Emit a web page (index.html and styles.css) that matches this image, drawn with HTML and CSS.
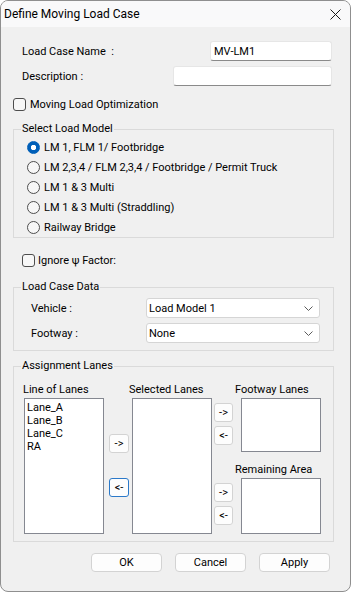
FILE: index.html
```html
<!DOCTYPE html>
<html lang="en">

<head>
    <meta charset="UTF-8">
    <meta name="viewport" content="width=device-width, initial-scale=1.0">
    <title>Define Moving Load Case</title>
    <link rel="stylesheet" href="styles.css">
</head>

<body>
    <div class="window">
        <div class="titlebar">
            <span class="title">Define Moving Load Case</span>
            <svg class="close" width="11" height="11" viewBox="0 0 11 11">
                <path d="M0.5 0.5 L10.5 10.5 M10.5 0.5 L0.5 10.5" stroke="#1a1a1a" stroke-width="1" fill="none" />
            </svg>
        </div>

        <div class="content">
            <div class="field-row first">
                <span class="label">Load Case Name &nbsp;:</span>
                <div class="text-input name-input">MV-LM1</div>
            </div>
            <div class="field-row">
                <span class="label">Description :</span>
                <div class="text-input desc-input"></div>
            </div>

            <div class="check-row optimization">
                <span class="checkbox"></span>
                <span>Moving Load Optimization</span>
            </div>

            <fieldset class="group model-group">
                <legend>Select Load Model</legend>
                <div class="radio-list">
                    <div class="radio-row"><span class="radio checked"></span>LM 1, FLM 1/ Footbridge</div>
                    <div class="radio-row"><span class="radio"></span>LM 2,3,4 / FLM 2,3,4 / Footbridge / Permit Truck</div>
                    <div class="radio-row"><span class="radio"></span>LM 1 &amp; 3 Multi</div>
                    <div class="radio-row"><span class="radio"></span>LM 1 &amp; 3 Multi (Straddling)</div>
                    <div class="radio-row"><span class="radio"></span>Railway Bridge</div>
                </div>
            </fieldset>

            <div class="check-row ignore">
                <span class="checkbox"></span>
                <span>Ignore ψ Factor:</span>
            </div>

            <fieldset class="group data-group">
                <legend>Load Case Data</legend>
                <div class="data-list">
                    <div class="data-row">
                        <span class="data-label">Vehicle :</span>
                        <div class="combo">
                            <span>Load Model 1</span>
                            <svg width="9" height="5" viewBox="0 0 9 5">
                                <path d="M0.5 0.5 L4.5 4.5 L8.5 0.5" stroke="#5c5c5c" stroke-width="1" fill="none" />
                            </svg>
                        </div>
                    </div>
                    <div class="data-row">
                        <span class="data-label">Footway :</span>
                        <div class="combo">
                            <span>None</span>
                            <svg width="9" height="5" viewBox="0 0 9 5">
                                <path d="M0.5 0.5 L4.5 4.5 L8.5 0.5" stroke="#5c5c5c" stroke-width="1" fill="none" />
                            </svg>
                        </div>
                    </div>
                </div>
            </fieldset>

            <fieldset class="group lanes-group">
                <legend>Assignment Lanes</legend>
                <div class="lanes">
                    <div class="lane-col">
                        <span class="col-label lines-label">Line of Lanes</span>
                        <div class="listbox tall">
                            <div>Lane_A</div>
                            <div>Lane_B</div>
                            <div>Lane_C</div>
                            <div>RA</div>
                        </div>
                    </div>
                    <div class="btn-col left-btns">
                        <button class="small-btn">-&gt;</button>
                        <button class="small-btn focused second">&lt;-</button>
                    </div>
                    <div class="lane-col selected-col">
                        <span class="col-label selected-label">Selected Lanes</span>
                        <div class="listbox tall"></div>
                    </div>
                    <div class="btn-col right-btns">
                        <button class="small-btn">-&gt;</button>
                        <button class="small-btn near">&lt;-</button>
                        <button class="small-btn far">-&gt;</button>
                        <button class="small-btn near">&lt;-</button>
                    </div>
                    <div class="lane-col footway-col">
                        <span class="col-label side-label">Footway Lanes</span>
                        <div class="listbox footway-box"></div>
                        <span class="col-label side-label remaining-label">Remaining Area</span>
                        <div class="listbox remaining-box"></div>
                    </div>
                </div>
            </fieldset>

            <div class="actions">
                <button class="btn">OK</button>
                <button class="btn">Cancel</button>
                <button class="btn">Apply</button>
            </div>
        </div>
    </div>
</body>

</html>
```

FILE: styles.css
```css
* {
    box-sizing: border-box;
}

body {
    margin: 0;
    font-family: "Segoe UI", Roboto, "Liberation Sans", sans-serif;
    font-size: 11px;
    color: #000;
}

.window {
    width: 351px;
    height: 592px;
    border: 1px solid #8f8f8f;
    border-radius: 8px;
    background-color: #f0f0f0;
    overflow: hidden;
}

.titlebar {
    height: 26px;
    display: flex;
    align-items: center;
    justify-content: space-between;
    padding: 0 9px 0 3px;
    background-color: #f9f9fa;
    font-size: 12px;
}

.content {
    padding: 0 16px 0 12px;
}

.field-row {
    display: flex;
    align-items: center;
    justify-content: space-between;
    height: 20px;
    margin: 5px 2px 0 9px;
}

.field-row.first {
    margin-top: 14px;
}

.text-input {
    height: 20px;
    background-color: #fff;
    border: 1px solid #e6e6e6;
    border-bottom: 1px solid #8a8a8a;
    border-radius: 3px;
    padding: 2px 3px;
    line-height: 15px;
}

.name-input {
    width: 122px;
}

.desc-input {
    width: 159px;
}

.check-row {
    display: flex;
    align-items: center;
    height: 13px;
}

.optimization {
    margin-top: 12px;
    gap: 4px;
}

.ignore {
    margin: 16px 0 0 9px;
    gap: 3px;
}

.checkbox {
    width: 13px;
    height: 13px;
    border: 1px solid #4d4d4d;
    border-radius: 3px;
    background-color: #f7f7f7;
}

.group {
    margin: 0;
    padding: 0;
    width: 321px;
    border: 1px solid #dadada;
    min-inline-size: 0;
}

.group legend {
    margin-left: 7px;
    padding: 0 1px;
    line-height: 16px;
}

.model-group {
    margin-top: 10px;
}

.radio-list {
    padding-left: 13px;
}

.radio-row {
    display: flex;
    align-items: center;
    gap: 4px;
    height: 20px;
}

.radio {
    width: 13px;
    height: 13px;
    border: 1px solid #4d4d4d;
    border-radius: 50%;
    background-color: #f7f7f7;
}

.radio.checked {
    border-color: #005fb8;
    background: radial-gradient(circle, #fff 0 2.4px, #005fb8 3px);
}

.data-group {
    margin-top: 12px;
}

.data-list {
    display: flex;
    flex-direction: column;
    gap: 5px;
    padding: 3px 13px 7px 17px;
}

.data-row {
    display: flex;
    align-items: center;
    height: 20px;
}

.data-label {
    width: 115px;
}

.combo {
    width: 174px;
    height: 20px;
    display: flex;
    align-items: center;
    justify-content: space-between;
    padding: 0 6px 0 2px;
    background-color: #fff;
    border: 1px solid #d5d5d5;
    border-radius: 3px;
}

.lanes-group {
    margin-top: 7px;
}

.lanes {
    display: flex;
    padding: 7px 0 7px 10px;
}

.lane-col {
    display: flex;
    flex-direction: column;
    width: 80px;
}

.col-label {
    height: 17px;
    line-height: 17px;
    white-space: nowrap;
}

.lines-label {
    margin-left: -1px;
}

.selected-col {
    margin-left: 3px;
}

.selected-label {
    margin-left: -3px;
}

.footway-col {
    margin-left: 8px;
}

.side-label {
    margin-left: -6px;
}

.remaining-label {
    margin-top: 9px;
}

.listbox {
    background-color: #fff;
    border: 1px solid #858891;
    padding: 2px 2px;
    line-height: 13px;
}

.listbox.tall {
    height: 136px;
}

.footway-box {
    height: 54px;
}

.remaining-box {
    height: 56px;
}

.btn-col {
    display: flex;
    flex-direction: column;
}

.left-btns {
    width: 20px;
    margin-left: 5px;
    padding-top: 53px;
}

.left-btns .second {
    margin-top: 25px;
}

.right-btns {
    width: 19px;
    margin-left: 2px;
    padding-top: 22px;
}

.right-btns .near {
    margin-top: 4px;
}

.right-btns .far {
    margin-top: 38px;
}

.small-btn {
    height: 19px;
    padding: 0;
    font-family: inherit;
    font-size: 11px;
    line-height: 15px;
    background-color: #fdfdfd;
    border: 1px solid #d3d3d3;
    border-radius: 3px;
    color: #000;
}

.small-btn.focused {
    border-color: #2b79c9;
}

.actions {
    display: flex;
    justify-content: flex-end;
    gap: 13px;
    margin: 11px 4px 0 0;
}

.btn {
    width: 71px;
    height: 19px;
    padding: 0;
    font-family: inherit;
    font-size: 11px;
    background-color: #fdfdfd;
    border: 1px solid #d3d3d3;
    border-radius: 4px;
    color: #000;
}
```
